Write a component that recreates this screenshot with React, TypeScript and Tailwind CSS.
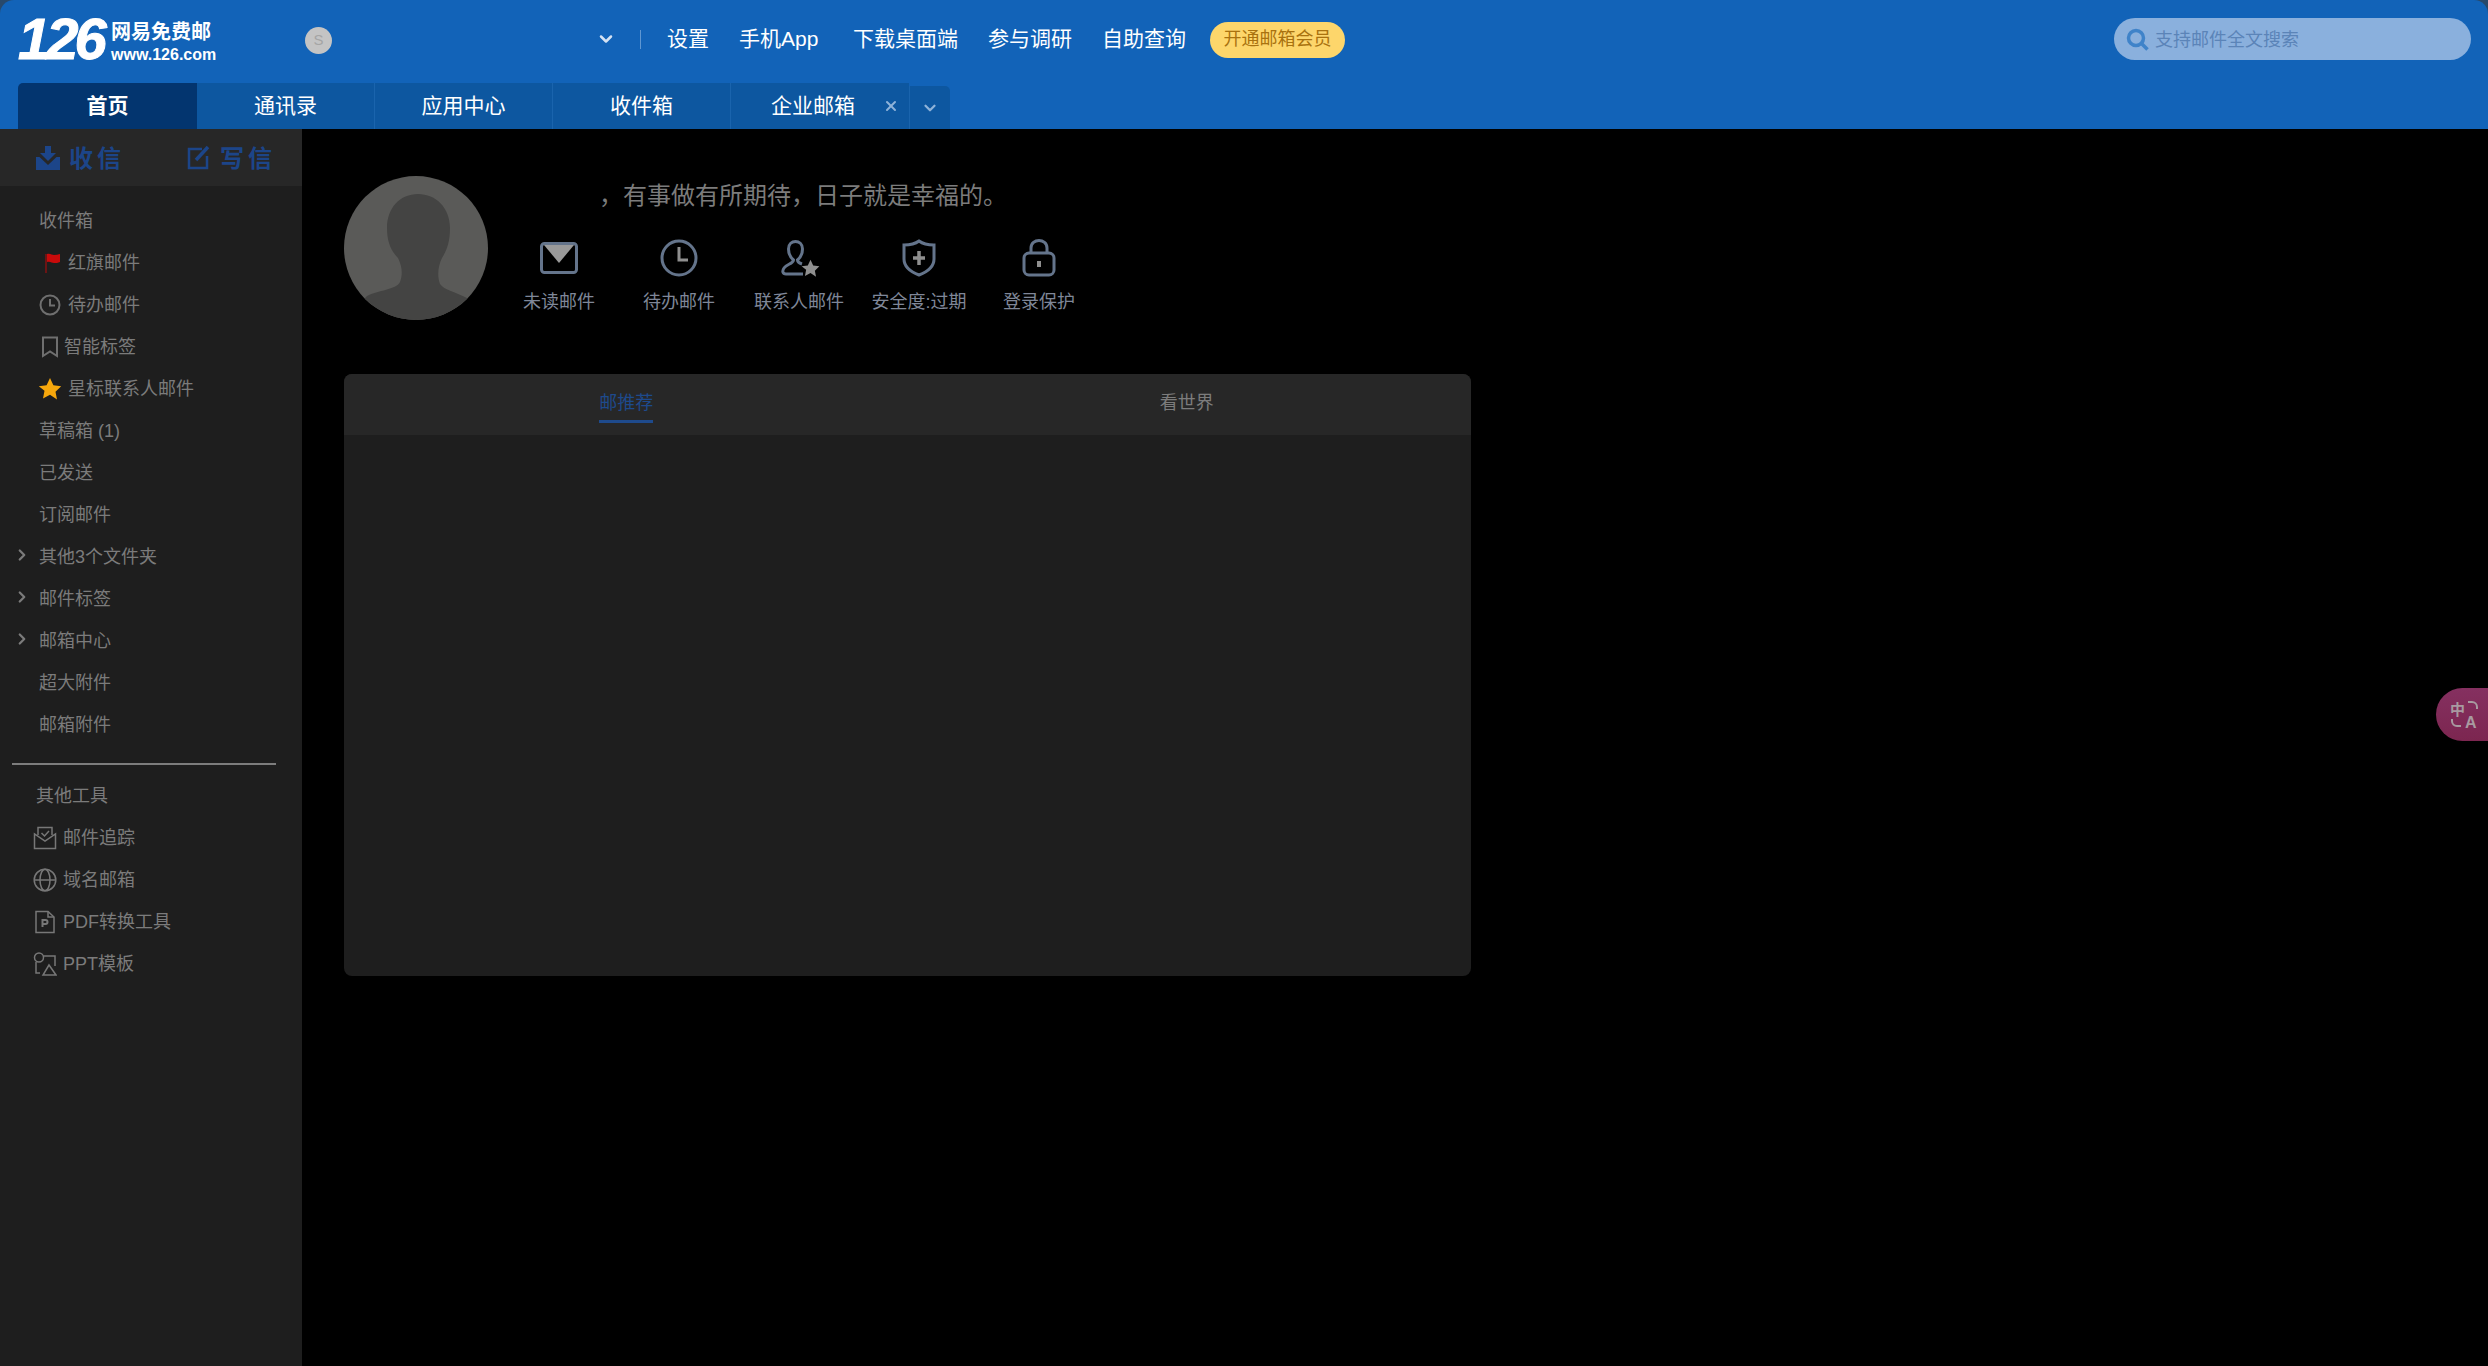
import type { ReactNode } from 'react'
import { ChevronDown, ChevronRight, X } from 'lucide-react'

const FONT = "font-['Liberation_Sans','Noto_Sans_CJK_SC',sans-serif]"

function ClockSmall() {
    return (
        <svg width="22" height="22" viewBox="0 0 22 22" fill="none" stroke="#6f6f6f" strokeWidth="2">
            <circle cx="11" cy="11" r="9.5" />
            <path d="M11 5v6.5h5" />
        </svg>
    )
}

function Flag() {
    return (
        <svg width="22" height="20" viewBox="0 0 22 20">
            <rect x="6" y="1" width="2" height="19" fill="#6b1414" />
            <path d="M8 1c3-1 5 1 7 1s4-.5 6-1v8c-2 1-4 1-6 1S11 8 8 9z" fill="#c90a0a" />
        </svg>
    )
}

function Bookmark() {
    return (
        <svg width="18" height="22" viewBox="0 0 18 22" fill="none" stroke="#6f6f6f" strokeWidth="2">
            <path d="M2 1.500h14v18.500l-7-4.500-7 4.500z" />
        </svg>
    )
}

function Star({ fill = '#f6a70c', size = 24 }: { fill?: string; size?: number }) {
    return (
        <svg className="shrink-0" width={size} height={size} viewBox="0 0 24 24">
            <path d="M12 1l3.400 7.300 7.800 1-5.700 5.400 1.500 7.800L12 17.700l-7 3.800 1.500-7.800L.8 9.300l7.800-1z" fill={fill} />
        </svg>
    )
}

function MailTrack() {
    return (
        <svg width="24" height="24" viewBox="0 0 24 24" fill="none" stroke="#777" strokeWidth="1.500">
            <path d="M5 9V1.500h14V9" />
            <path d="M1.500 8v14.500h21V8L12 15z" />
            <path d="M8.500 7l3 3 4.500-5" />
        </svg>
    )
}

function Globe() {
    return (
        <svg width="24" height="24" viewBox="0 0 24 24" fill="none" stroke="#777" strokeWidth="1.500">
            <circle cx="12" cy="12" r="10.800" />
            <ellipse cx="12" cy="12" rx="5" ry="10.800" />
            <path d="M1.500 12h21" />
        </svg>
    )
}

function PdfIcon() {
    return (
        <svg width="22" height="24" viewBox="0 0 22 24" fill="none" stroke="#777" strokeWidth="1.500">
            <path d="M2 1.500h12l6 5.500v15.500H2z" />
            <path d="M14 1.500V7h6" />
            <path d="M8.500 17v-7h3a2 2 0 010 4h-3" strokeWidth="2" />
        </svg>
    )
}

function PptIcon() {
    return (
        <svg width="24" height="24" viewBox="0 0 24 24" fill="none" stroke="#777" strokeWidth="1.500">
            <circle cx="6" cy="5.500" r="4.500" />
            <path d="M10.500 4H22v10M3 10v11h4" />
            <path d="M16 13l7 10H10z" />
        </svg>
    )
}

function NavRow({ icon, offset, arrow, children }: { icon?: ReactNode; offset?: string; arrow?: boolean; children: ReactNode }) {
    return (
        <div className="relative flex h-[42px] items-center pl-[39px] text-[18px] text-[#7b7b7b]">
            {arrow && <ChevronRight className="absolute left-[13px] top-[10px] text-[#7b7b7b]" size={18} strokeWidth={3} />}
            {icon && <span className="flex w-[22px] justify-center">{icon}</span>}
            <span className={icon ? offset ?? 'ml-[7px]' : ''}>{children}</span>
        </div>
    )
}

function ToolRow({ icon, children }: { icon: ReactNode; children: ReactNode }) {
    return (
        <div className="flex h-[42px] items-center pl-[33px] text-[18px] text-[#7b7b7b]">
            <span className="flex w-[24px] justify-center">{icon}</span>
            <span className="ml-[6px]">{children}</span>
        </div>
    )
}

function Sidebar() {
    return (
        <aside className="w-[302px] shrink-0 bg-[#1e1e1e]">
            <div className="flex h-[57px] items-center bg-[#272727] text-[24px] font-bold tracking-[4px] text-[#1c4589]">
                <svg className="ml-[35px]" width="26" height="26" viewBox="0 0 26 26" fill="#1c4589">
                    <path d="M10 1h6v7h5l-8 8-8-8h5z" />
                    <path d="M1 12h3.500l8.500 8 8.500-8H25v13H1z" />
                </svg>
                <span className="ml-[8px] pt-[2px]">收信</span>
                <svg className="ml-[62px]" width="24" height="26" viewBox="0 0 24 26" fill="none" stroke="#1c4589" strokeWidth="2.500">
                    <path d="M15 4H2v19h18V11" />
                    <path d="M9 15L21 2" strokeWidth="3.500" />
                </svg>
                <span className="ml-[9px] pt-[2px]">写信</span>
            </div>
            <div className="pt-[14px]">
                <NavRow>收件箱</NavRow>
                <NavRow icon={<Flag />}>红旗邮件</NavRow>
                <NavRow icon={<ClockSmall />}>待办邮件</NavRow>
                <NavRow icon={<Bookmark />} offset="ml-[3px]">智能标签</NavRow>
                <NavRow icon={<Star />}>星标联系人邮件</NavRow>
                <NavRow>草稿箱 (1)</NavRow>
                <NavRow>已发送</NavRow>
                <NavRow>订阅邮件</NavRow>
                <NavRow arrow>其他3个文件夹</NavRow>
                <NavRow arrow>邮件标签</NavRow>
                <NavRow arrow>邮箱中心</NavRow>
                <NavRow>超大附件</NavRow>
                <NavRow>邮箱附件</NavRow>
            </div>
            <div className="mb-[10px] ml-[12px] mt-[17px] h-[2px] w-[264px] bg-[#7d7d7d]" />
            <div className="mt-[1px] flex h-[42px] items-center pl-[36px] text-[18px] text-[#7b7b7b]">其他工具</div>
            <ToolRow icon={<MailTrack />}>邮件追踪</ToolRow>
            <ToolRow icon={<Globe />}>域名邮箱</ToolRow>
            <ToolRow icon={<PdfIcon />}>PDF转换工具</ToolRow>
            <ToolRow icon={<PptIcon />}>PPT模板</ToolRow>
        </aside>
    )
}

function Header() {
    const links = [
        { label: '设置', w: 'w-[42px]' },
        { label: '手机App', w: 'w-[84px]' },
        { label: '下载桌面端', w: 'w-[105px]' },
        { label: '参与调研', w: 'w-[84px]' },
        { label: '自助查询', w: 'w-[84px]' },
    ]
    const tabs = ['通讯录', '应用中心', '收件箱']
    return (
        <header className="h-[129px] shrink-0 rounded-t-[14px] bg-[#1263b8]">
            <div className="flex h-[83px] items-center pb-[5px]">
                <div className="ml-[18px] w-[84px] text-[58px] font-bold italic leading-none tracking-[-4px] text-white [-webkit-text-stroke:1px_white]">126</div>
                <div className="ml-[9px] mt-[5px] w-[124px] font-bold text-white">
                    <div className="text-[20px] leading-[26px]">网易免费邮</div>
                    <div className="text-[16px] leading-[20px]">www.126.com</div>
                </div>
                <div className="ml-[70px] mt-[3px] flex h-[27px] w-[27px] items-center justify-center rounded-full bg-[#c4c4c4] text-[15px] text-[#a5a5a5]">S</div>
                <ChevronDown className="ml-[264px] text-[#d4e2f3]" size={20} strokeWidth={3} />
                <div className="ml-[24px] h-[19px] w-px bg-[#5f97d2]" />
                <div className="ml-[26px] flex gap-[30px] text-[21px] text-white">
                    {links.map(l => (
                        <span key={l.label} className={`${l.w} whitespace-nowrap`}>{l.label}</span>
                    ))}
                </div>
                <div className="ml-[24px] mt-[1px] flex h-[36px] w-[135px] items-center justify-center rounded-full bg-[#fdd66b] text-[18px] text-[#a9720f]">开通邮箱会员</div>
                <div className="ml-auto mr-[17px] flex h-[42px] w-[357px] items-center rounded-full bg-[#8ab0dd] pl-[12px] text-[18px] text-[#5b84b8]">
                    <svg width="23" height="23" viewBox="0 0 23 23" fill="none" stroke="#3f83c9" strokeWidth="3.500">
                        <circle cx="10" cy="10" r="7.500" />
                        <path d="M15.500 15.500l6 6" />
                    </svg>
                    <span className="ml-[6px] pt-[2px]">支持邮件全文搜索</span>
                </div>
            </div>
            <div className="flex h-[46px] items-end pl-[18px] text-[21px] text-white">
                <div className="flex h-full w-[179px] items-center justify-center rounded-tl-[5px] bg-[#03356f] font-bold">首页</div>
                {tabs.map(t => (
                    <div key={t} className="flex h-full w-[178px] items-center justify-center border-r border-[#1a64ad] bg-[#0d57a0]">{t}</div>
                ))}
                <div className="flex h-full w-[178px] items-center bg-[#0d57a0] pl-[40px]">
                    企业邮箱
                    <X className="ml-[28px] text-[#8fb3d9]" size={16} strokeWidth={3} />
                </div>
                <div className="flex h-[43px] w-[41px] items-center justify-center rounded-tr-[5px] border-l border-[#1a64ad] bg-[#0d57a0]">
                    <ChevronDown className="text-[#8fb3d9]" size={18} strokeWidth={3} />
                </div>
            </div>
        </header>
    )
}

function ActionItem({ icon, label, warn }: { icon: ReactNode; label: string; warn?: boolean }) {
    return (
        <div className="flex w-[120px] flex-col items-center">
            <div className="flex h-[40px] items-center justify-center">{icon}</div>
            <div className={`mt-[9px] text-[18px] leading-[30px] ${warn ? 'text-[#d8796d]' : 'text-[#7f8798]'}`}>{label}</div>
        </div>
    )
}

const STROKE = '#64748b'

function Profile() {
    return (
        <div className="flex">
            <svg width="144" height="144" viewBox="0 0 144 144" className="shrink-0">
                <clipPath id="avatar-clip"><circle cx="72" cy="72" r="72" /></clipPath>
                <g clipPath="url(#avatar-clip)">
                    <rect width="144" height="144" fill="#5a5a58" />
                    <path d="M74 18C92 18 106 32 106 52C106 66 103 74 98 82C94 90 93 100 96 108C100 114 112 116 123 122L144 144L0 144L23 120C34 114 52 114 56 106C59 98 58 90 54 82C46 74 43 64 43 52C43 32 56 18 74 18Z" fill="#444443" />
                </g>
            </svg>
            <div className="ml-[11px]">
                <div className="pl-[100px] text-[24px] leading-[40px] text-[#7c7c7c]">，有事做有所期待，日子就是幸福的。</div>
                <div className="mt-[22px] flex">
                    <ActionItem label="未读邮件" icon={
                        <svg width="38" height="32" viewBox="0 0 38 32" fill="none" stroke={STROKE} strokeWidth="3">
                            <rect x="1.500" y="1.500" width="35" height="29" rx="3" />
                            <path d="M4 3h30L19 21z" fill="#9a9a9a" stroke="none" />
                        </svg>
                    } />
                    <ActionItem label="待办邮件" icon={
                        <svg width="38" height="38" viewBox="0 0 38 38" fill="none" stroke={STROKE} strokeWidth="3">
                            <circle cx="19" cy="19" r="17" />
                            <path d="M19 8v13h9" stroke="#8f8f8f" />
                        </svg>
                    } />
                    <ActionItem label="联系人邮件" icon={
                        <div className="relative h-[36px] w-[36px]">
                            <svg width="36" height="36" viewBox="0 0 36 36" fill="none" stroke={STROKE} strokeWidth="3">
                                <path d="M22 34H5c-3.500 0-4-3-2-6 2.500-4 9-4 9.500-8-3.500-3-5-7.500-5-11 0-5 3.500-7.500 7-7.500s7 2.500 7 7.500c0 3.500-1.500 8-5 11 0 2 1.500 3 4.500 4" />
                            </svg>
                            <span className="absolute bottom-[-2px] right-[-3px]"><Star fill="#8f8f8f" size={19} /></span>
                        </div>
                    } />
                    <ActionItem label="安全度:过期" icon={
                        <svg width="34" height="38" viewBox="0 0 34 38" fill="none" stroke={STROKE} strokeWidth="3">
                            <path d="M17 2c4 3 9 4 15 4v14c0 8-7 13-15 16C9 33 2 28 2 20V6c6 0 11-1 15-4z" />
                            <path d="M17 12v14M11 19h12" stroke="#8f8f8f" strokeWidth="3.500" />
                        </svg>
                    } />
                    <ActionItem label="登录保护" icon={
                        <svg width="34" height="38" viewBox="0 0 34 38" fill="none" stroke={STROKE} strokeWidth="3">
                            <rect x="2" y="14" width="30" height="22" rx="5" />
                            <path d="M9 14V9c0-5 4-7.500 8-7.500S25 4 25 9v5" />
                            <path d="M17 22v6" stroke="#8f8f8f" strokeWidth="4" />
                        </svg>
                    } />
                </div>
            </div>
        </div>
    )
}

function Card() {
    return (
        <div className="mt-[54px] h-[602px] w-[1127px] overflow-hidden rounded-lg bg-[#1e1e1e]">
            <div className="flex h-[61px] bg-[#272727] text-[18px]">
                <div className="flex flex-1 justify-center pl-[2px]">
                    <div className="h-[49px] border-b-[3px] border-[#1e4a8c] pt-[16px] leading-[26px] text-[#1e4a8c]">邮推荐</div>
                </div>
                <div className="flex flex-1 justify-center pr-[4px] pt-[16px] leading-[26px] text-[#7c7c7c]">看世界</div>
            </div>
        </div>
    )
}

export default function App() {
    return (
        <div className={`flex h-[1366px] w-[2488px] flex-col overflow-hidden bg-[#28496b] ${FONT}`}>
            <Header />
            <div className="flex min-h-0 flex-1 bg-black">
                <Sidebar />
                <main className="relative flex-1 pl-[42px] pt-[47px]">
                    <Profile />
                    <Card />
                    <div className="absolute right-0 top-[559px] flex h-[53px] w-[52px] items-center rounded-l-full bg-gradient-to-b from-[#853060] to-[#7c2650] pl-[14px]">
                        <svg width="30" height="30" viewBox="0 0 30 30" fill="none" stroke="#a89aa0" strokeWidth="2">
                            <text x="0" y="15" fontSize="15" fill="#a89aa0" stroke="none" fontWeight="bold">中</text>
                            <text x="15" y="28" fontSize="16" fill="#a89aa0" stroke="none" fontWeight="bold">A</text>
                            <path d="M18 2h4a5 5 0 015 5v2M2 19v2a5 5 0 005 5h4" />
                        </svg>
                    </div>
                </main>
            </div>
        </div>
    )
}
